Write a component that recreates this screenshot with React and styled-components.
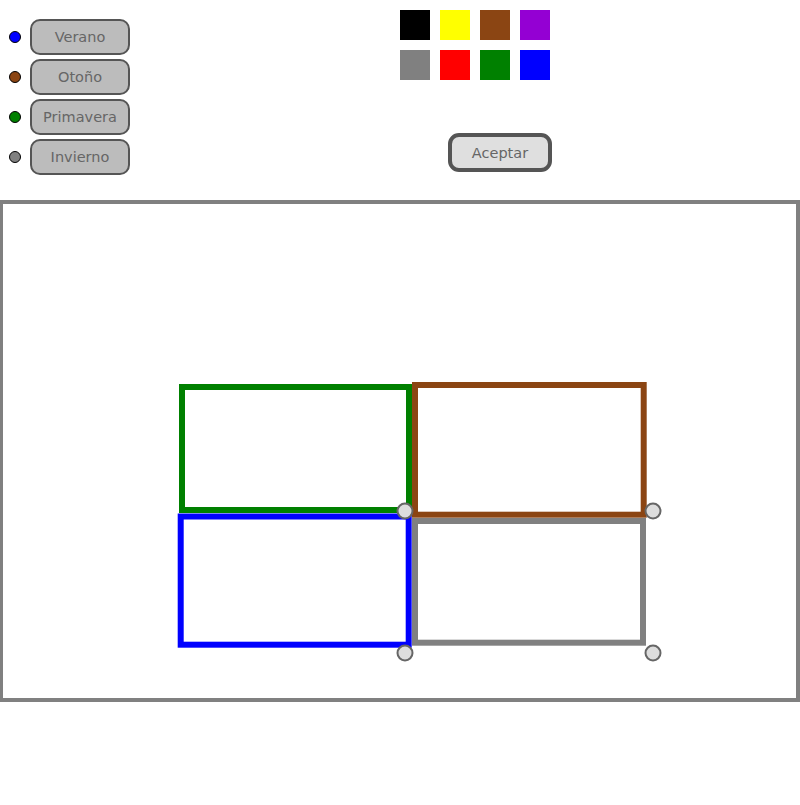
import React from "react";
import styled, { createGlobalStyle } from "styled-components";

const Global = createGlobalStyle`
  html, body { margin: 0; padding: 0; background: #fff; }
  body { font-family: "DejaVu Sans", "Liberation Sans", sans-serif; }
`;

const Page = styled.div`
  width: 800px;
  height: 805px;
  overflow: hidden;
`;

const Top = styled.div`
  display: flex;
  height: 200px;
`;

const SeasonList = styled.div`
  display: flex;
  flex-direction: column;
  gap: 4px;
  margin: 19px 0 0 9px;
`;

const SeasonRow = styled.div`
  display: flex;
  align-items: center;
  gap: 9px;
`;

const Dot = styled.span`
  width: 10px;
  height: 10px;
  border-radius: 50%;
  border: 1px solid #000;
  background: ${(p) => p.$color};
`;

const SeasonButton = styled.button`
  box-sizing: border-box;
  width: 100px;
  height: 36px;
  border: 2px solid #555;
  border-radius: 10px;
  background: #bcbcbc;
  color: #666;
  font-family: "DejaVu Sans", sans-serif;
  font-size: 14.5px;
  padding: 0;
`;

const Palette = styled.div`
  display: flex;
  flex-direction: column;
  margin: 10px 0 0 270px;
`;

const SwatchGrid = styled.div`
  display: grid;
  grid-template-columns: repeat(4, 30px);
  grid-auto-rows: 30px;
  gap: 10px;
`;

const Swatch = styled.div`
  background: ${(p) => p.$color};
`;

const AcceptButton = styled.button`
  box-sizing: border-box;
  width: 104px;
  height: 39px;
  margin: 53px 0 0 48px;
  border: 4px solid #555;
  border-radius: 11px;
  background: #dfdfdf;
  color: #666;
  font-family: "DejaVu Sans", sans-serif;
  font-size: 14.5px;
  padding: 0;
`;

const Canvas = styled.div`
  box-sizing: border-box;
  width: 800px;
  height: 502px;
  border: 4px solid #808080;
  border-left-width: 3px;
  background: #fff;
`;

const Drawing = styled.svg`
  display: block;
  width: 793px;
  height: 494px;
`;

const seasons = [
  { name: "Verano", color: "#0000ff" },
  { name: "Otoño", color: "#8b4513" },
  { name: "Primavera", color: "#008000" },
  { name: "Invierno", color: "#808080" },
];

const swatches = [
  "#000000", "#ffff00", "#8b4513", "#9400d3",
  "#808080", "#ff0000", "#008000", "#0000ff",
];

const rects = [
  { x: 182, y: 387, w: 227, h: 123, c: "#008000" },
  { x: 180.7, y: 516.5, w: 228, h: 128.2, c: "#0000ff" },
  { x: 415, y: 385, w: 228.7, h: 129.7, c: "#8b4513" },
  { x: 415, y: 521, w: 228, h: 121.7, c: "#808080" },
];

const handles = [
  [405, 511], [653, 511], [405, 653], [653, 653],
];

export default function App() {
  return (
    <Page>
      <Global />
      <Top>
        <SeasonList>
          {seasons.map((s) => (
            <SeasonRow key={s.name}>
              <Dot $color={s.color} />
              <SeasonButton>{s.name}</SeasonButton>
            </SeasonRow>
          ))}
        </SeasonList>
        <Palette>
          <SwatchGrid>
            {swatches.map((c, i) => (
              <Swatch key={i} $color={c} />
            ))}
          </SwatchGrid>
          <AcceptButton>Aceptar</AcceptButton>
        </Palette>
      </Top>
      <Canvas>
        <Drawing viewBox="3 204 793 494">
          {rects.map((r, i) => (
            <rect
              key={i}
              x={r.x}
              y={r.y}
              width={r.w}
              height={r.h}
              fill="none"
              stroke={r.c}
              strokeWidth="6"
            />
          ))}
          {handles.map(([cx, cy], i) => (
            <circle
              key={i}
              cx={cx}
              cy={cy}
              r="7.5"
              fill="#dddddd"
              stroke="#666"
              strokeWidth="2"
            />
          ))}
        </Drawing>
      </Canvas>
    </Page>
  );
}
